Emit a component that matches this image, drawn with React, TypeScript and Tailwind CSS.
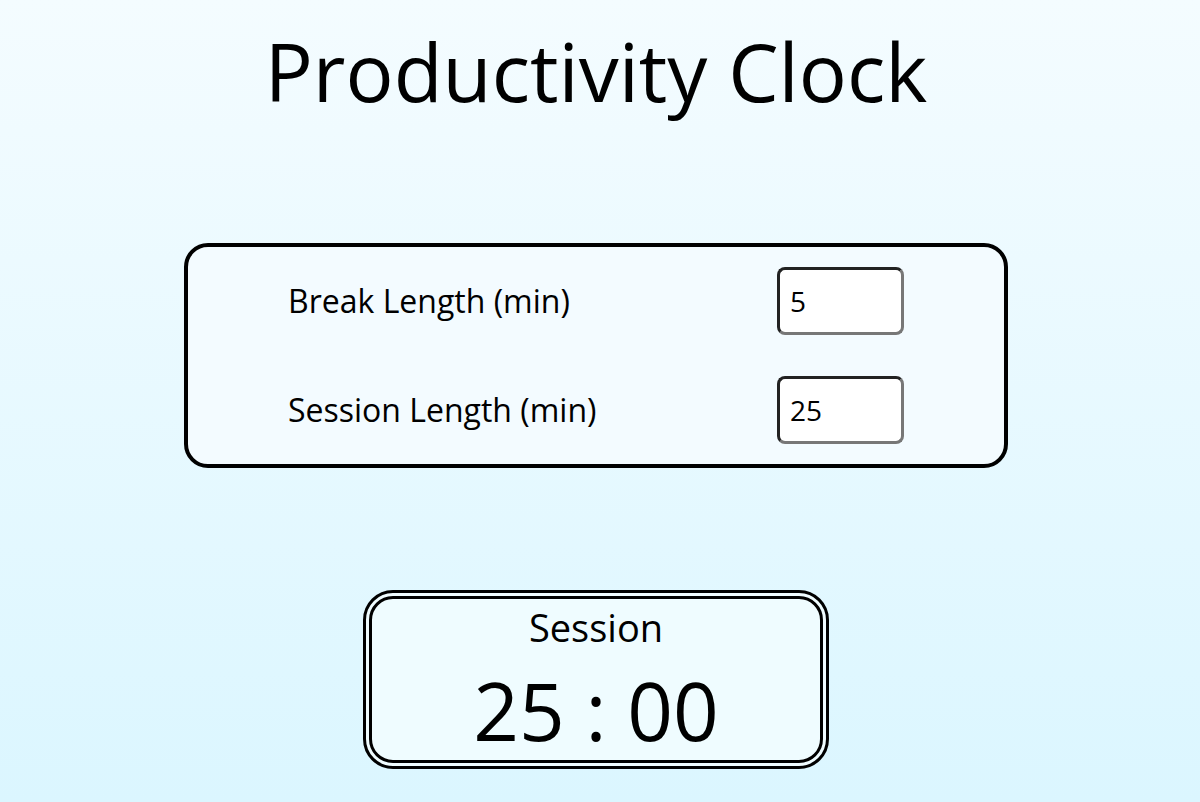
import React from "react";

export default function App() {
  const font = { fontFamily: '"Open Sans", "Noto Sans", sans-serif' };
  return (
    <div
      className="w-[1200px] h-[802px] overflow-hidden bg-gradient-to-b from-[#f4fcff] to-[#dbf6ff] text-black"
      style={font}
    >
      <div className="w-[1192px] flex flex-col items-center">
        <h1 className="mt-[11px] text-[80px] font-medium leading-normal">Productivity Clock</h1>
        <div className="mt-[112px] w-[824px] h-[225px] border-4 border-black rounded-[24px] bg-[#f3fbff] px-[100px] py-[20px] flex flex-col justify-between">
          <div className="flex items-center justify-between">
            <label className="text-[32px]">Break Length (min)</label>
            <input
              readOnly
              value="5"
              className="w-[127px] h-[68px] rounded-[8px] bg-white border-[3px] border-t-[#222] border-l-[#222] border-b-[#777] border-r-[#777] pl-[10px] text-[28px] outline-none"
              style={font}
            />
          </div>
          <div className="flex items-center justify-between">
            <label className="text-[32px]">Session Length (min)</label>
            <input
              readOnly
              value="25"
              className="w-[127px] h-[68px] rounded-[8px] bg-white border-[3px] border-t-[#222] border-l-[#222] border-b-[#777] border-r-[#777] pl-[10px] text-[28px] outline-none"
              style={font}
            />
          </div>
        </div>
        <div className="mt-[122px] w-[466px] h-[179px] border-[9px] border-double border-black rounded-[30px] bg-[#effcff] flex flex-col items-center">
          <div className="text-[38px] leading-normal">Session</div>
          <div className="mt-[14px] text-[80px] font-medium leading-none">25 : 00</div>
        </div>
      </div>
    </div>
  );
}
